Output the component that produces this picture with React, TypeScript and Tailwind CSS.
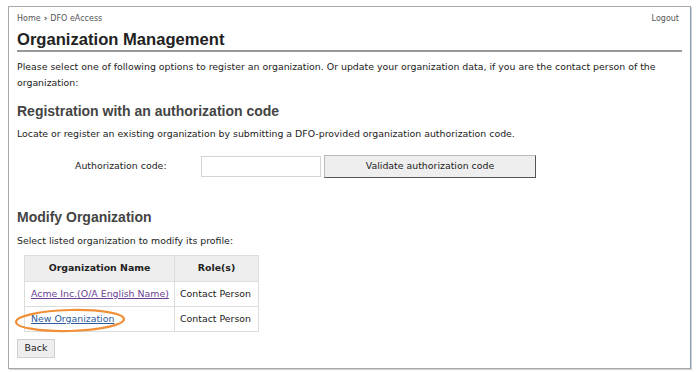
import React from 'react';

const verdana = { fontFamily: '"DejaVu Sans", Verdana, sans-serif' };

function SectionTitle({ children }: { children: React.ReactNode }) {
  return (
    <h2 className="text-[14px] leading-[18px] font-bold text-[#444] font-['Liberation_Sans',Arial,sans-serif]">
      {children}
    </h2>
  );
}

export default function App() {
  return (
    <div className="w-[700px] h-[372px] bg-white pt-[6px] pl-[8px]" style={verdana}>
      <div className="w-[683px] h-[363px] border border-[#a8a8a8] border-r-[#8a9fb5] shadow-[1px_1px_0_#d0d0d0] px-[8px] text-[#222]">
        {/* breadcrumb */}
        <div className="flex justify-between items-center h-[21px] pt-[2px] text-[8px] text-[#555]">
          <div className="flex items-center gap-[3px]">
            <span>Home</span>
            <span className="font-bold text-[9px] leading-none">›</span>
            <span>DFO eAccess</span>
          </div>
          <span className="pr-[3px]">Logout</span>
        </div>

        <h1 className="mt-[2px] text-[16.6px] leading-[20px] font-bold text-[#222] font-['Liberation_Sans',Arial,sans-serif] border-b-2 border-[#999]">
          Organization Management
        </h1>

        <p className="mt-[7px] text-[9.4px] leading-[16px] pr-[10px]">
          Please select one of following options to register an organization. Or update your organization data, if you are the contact person of the organization:
        </p>

        <div className="mt-[11px]">
          <SectionTitle>Registration with an authorization code</SectionTitle>
        </div>
        <p className="mt-[6px] text-[9.4px] leading-[16px]">
          Locate or register an existing organization by submitting a DFO-provided organization authorization code.
        </p>

        <div className="mt-[13px] flex items-center h-[22px] text-[9.4px]">
          <div className="w-[184px] pl-[58px]">Authorization code:</div>
          <input className="w-[120px] h-[21px] border border-[#d4d4d4] bg-white outline-none" />
          <button className="ml-[3px] w-[212px] h-[23px] bg-[#eeeeee] border border-t-[#bbb] border-l-[#bbb] border-r-[#555] border-b-[#555] text-[#222]">
            Validate authorization code
          </button>
        </div>

        <div className="mt-[31px]">
          <SectionTitle>Modify Organization</SectionTitle>
        </div>
        <p className="mt-[7px] text-[9.4px] leading-[16px]">Select listed organization to modify its profile:</p>

        <div className="mt-[6px] ml-[7px]">
          <table className="border-collapse text-[9.4px]">
            <thead>
              <tr className="bg-[#eeeeee] h-[26px]">
                <th className="w-[150px] border border-[#ddd] font-bold">Organization Name</th>
                <th className="w-[84px] border border-[#ddd] font-bold">Role(s)</th>
              </tr>
            </thead>
            <tbody>
              <tr className="h-[25px]">
                <td className="border border-[#ddd] pl-[6px]">
                  <a href="#" className="text-[#6b3f93] underline">Acme Inc.(O/A English Name)</a>
                </td>
                <td className="border border-[#ddd] px-[5px] whitespace-nowrap">Contact Person</td>
              </tr>
              <tr className="h-[25px]">
                <td className="border border-[#ddd] pl-[6px] relative">
                  <a href="#" className="text-[#2d5a9a] underline">New Organization</a>
                  <svg className="absolute left-[-11px] top-[1px]" width="114" height="26" viewBox="0 0 114 26">
                    <ellipse cx="56" cy="12.5" rx="54" ry="10.5" fill="none" stroke="#f0913a" strokeWidth="2.2" transform="rotate(-1.5 56 12.5)" />
                  </svg>
                </td>
                <td className="border border-[#ddd] px-[5px] whitespace-nowrap">Contact Person</td>
              </tr>
            </tbody>
          </table>
        </div>

        <button className="mt-[7px] w-[38px] h-[19px] bg-[#eeeeee] border border-[#cfcfcf] text-[9.4px] text-[#222]">
          Back
        </button>
      </div>
    </div>
  );
}
